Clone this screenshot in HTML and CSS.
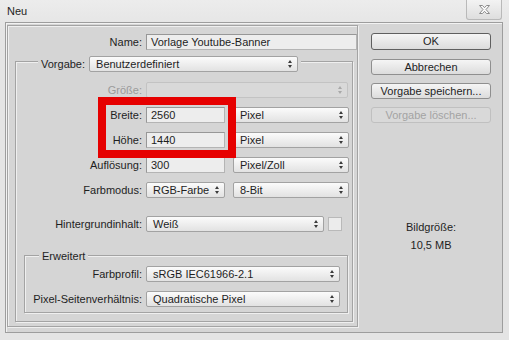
FILE: index.html
```html
<!DOCTYPE html>
<html lang="de">
	<head>
		<title>Neu</title>
		<meta charset="utf-8" />
		<link rel="stylesheet" href="styles.css">
	</head>
	<body>
		<div class="window">
			<div class="titlebar">
				<span class="title">Neu</span>
				<div class="close">
					<svg width="13" height="11" viewBox="0 0 13 11">
						<path d="M1.5 1.5h3l2 2.2 2-2.2h3l-3.5 4 3.5 4h-3l-2-2.2-2 2.2h-3l3.5-4z" fill="#fafafa" stroke="#8c8c8c" stroke-width="1" stroke-linejoin="round"/>
					</svg>
				</div>
			</div>

			<div class="client">
				<div class="left etched">
					<div class="row name-row">
						<label>Name:</label>
						<div class="input name-input">Vorlage Youtube-Banner</div>
					</div>

					<div class="group preset etched">
						<div class="legend">
							<label>Vorgabe:</label>
							<div class="select preset-select">Benutzerdefiniert<span class="arrows"></span></div>
						</div>

						<div class="row first">
							<label class="disabled">Größe:</label>
							<div class="select disabled size-select"><span class="arrows"></span></div>
						</div>
						<div class="row">
							<label>Breite:</label>
							<div class="input num">2560</div>
							<div class="select unit">Pixel<span class="arrows"></span></div>
						</div>
						<div class="row">
							<label>Höhe:</label>
							<div class="input num">1440</div>
							<div class="select unit">Pixel<span class="arrows"></span></div>
						</div>
						<div class="row">
							<label>Auflösung:</label>
							<div class="input num">300</div>
							<div class="select unit">Pixel/Zoll<span class="arrows"></span></div>
						</div>
						<div class="row">
							<label>Farbmodus:</label>
							<div class="select num">RGB-Farbe<span class="arrows"></span></div>
							<div class="select unit">8-Bit<span class="arrows"></span></div>
						</div>
						<div class="row spaced">
							<label>Hintergrundinhalt:</label>
							<div class="select bg-select">Weiß<span class="arrows"></span></div>
							<div class="swatch"></div>
						</div>

						<div class="group advanced etched">
							<div class="legend">Erweitert</div>
							<div class="row first">
								<label>Farbprofil:</label>
								<div class="select adv-select">sRGB IEC61966-2.1<span class="arrows"></span></div>
							</div>
							<div class="row">
								<label>Pixel-Seitenverhältnis:</label>
								<div class="select adv-select">Quadratische Pixel<span class="arrows"></span></div>
							</div>
						</div>
					</div>
				</div>

				<div class="right">
					<div class="button default">OK</div>
					<div class="button">Abbrechen</div>
					<div class="button">Vorgabe speichern...</div>
					<div class="button disabled">Vorgabe löschen...</div>

					<div class="info">
						<div>Bildgröße:</div>
						<div>10,5 MB</div>
					</div>
				</div>
			</div>

			<div class="highlight"></div>
		</div>
	</body>
</html>
```

FILE: styles.css
```css
* {
	box-sizing: border-box;
}

body {
	margin: 0;
	font-family: "Liberation Sans", Arial, sans-serif;
	font-size: 11px;
	color: #1e1e1e;
	background: #e6e6e6;
}

.window {
	position: relative;
	width: 509px;
	height: 340px;
	overflow: hidden;
	background: linear-gradient(#ececec, #e4e4e4 30px);
}

.titlebar {
	height: 22px;
	display: flex;
	justify-content: space-between;
	padding-left: 7px;
}
.title {
	line-height: 22px;
}
.close {
	width: 36px;
	height: 20px;
	margin-right: 7px;
	border: 1px solid #b9b9b9;
	border-top: 0;
	border-radius: 0 0 3px 3px;
	background: linear-gradient(#f3f3f3, #dedede);
	display: flex;
	align-items: center;
	justify-content: center;
}

.client {
	display: flex;
	margin-left: 5px;
	width: 498px;
	height: 311px;
	padding: 2px 1px;
	border: 1px solid #9d9d9d;
	box-shadow: inset 1px 1px 0 #f2f2f2;
	background: #d5d5d5;
}

.etched {
	border: 1px solid #a3a3a3;
	box-shadow: inset 1px 1px 0 #efefef, 1px 1px 0 #efefef;
}

.left {
	flex: none;
	width: 351px;
	height: 302px;
}

/* form rows */
.row {
	display: flex;
	align-items: center;
	height: 16px;
	margin-top: 9px;
}
.row label {
	flex: none;
	width: 126px;
	margin-right: 4px;
	text-align: right;
}
.row.first {
	margin-top: 10px;
}
.row.spaced {
	margin-top: 18px;
}
label.disabled {
	color: #9a9a9a;
}

.name-row {
	margin-top: 7px;
	height: 17px;
}
.name-row label {
	width: 134px;
}
.name-input {
	width: 211px;
	height: 17px;
}

.group .legend {
	display: flex;
	align-items: center;
	width: max-content;
	padding: 0 3px;
	background: #d5d5d5;
}

.preset {
	margin: 11px 0 0 7px;
	width: 338px;
	height: 261px;
}
.preset > .legend {
	height: 17px;
	margin: -7px 0 0 22px;
}
.preset-select {
	width: 209px;
	margin-left: 4px;
	height: 17px;
}
.size-select {
	width: 202px;
}

.advanced {
	margin: 23px 0 0 8px;
	width: 324px;
	height: 58px;
}
.advanced > .legend {
	height: 14px;
	margin: -7px 0 0 14px;
}
.advanced .row.first {
	margin-top: 3px;
}
.advanced .row label {
	width: 117px;
}
.adv-select {
	width: 194px;
}

/* controls */
.input {
	height: 16px;
	padding: 0 4px;
	line-height: 14px;
	border: 1px solid #979797;
	border-right-color: #b4b4b4;
	border-bottom-color: #b4b4b4;
	background: #ededed;
}
.name-input {
	line-height: 15px;
}

.select {
	display: flex;
	align-items: center;
	justify-content: space-between;
	height: 16px;
	padding: 0 5px 0 6px;
	border: 1px solid #a2a2a2;
	border-radius: 2px;
	background: linear-gradient(#fbfbfb, #e2e2e2);
}
.select.disabled {
	border-color: #c3c3c3;
	background: #d9d9d9;
	justify-content: flex-end;
}

.arrows {
	display: flex;
	flex-direction: column;
	gap: 2px;
	margin-left: auto;
}
.arrows::before,
.arrows::after {
	content: "";
	border-left: 2.5px solid transparent;
	border-right: 2.5px solid transparent;
}
.arrows::before {
	border-bottom: 3px solid #3a3a3a;
}
.arrows::after {
	border-top: 3px solid #3a3a3a;
}
.select.disabled .arrows::before {
	border-bottom-color: #a8a8a8;
}
.select.disabled .arrows::after {
	border-top-color: #a8a8a8;
}

.num {
	width: 79px;
}
.unit {
	width: 116px;
	margin-left: 8px;
}
.bg-select {
	width: 178px;
}
.swatch {
	width: 14px;
	height: 14px;
	margin-left: 4px;
	border: 1px solid #b9b9b9;
	background: #ececec;
}

/* right column */
.right {
	flex: 1;
	display: flex;
	flex-direction: column;
	padding: 8px 0 0 13px;
}

.button {
	width: 120px;
	height: 16px;
	margin-bottom: 8px;
	line-height: 14px;
	text-align: center;
	border: 1px solid #8f8f8f;
	border-radius: 3px;
	background: linear-gradient(#f5f5f5, #dcdcdc);
}
.button.default {
	height: 17px;
	margin-bottom: 9px;
	line-height: 15px;
	border-color: #5f5f5f;
}
.button.disabled {
	color: #a3a3a3;
	border-color: #c0c0c0;
	background: #d9d9d9;
}

.info {
	width: 120px;
	margin-top: 87px;
	text-align: center;
	line-height: 18px;
}

/* annotation */
.highlight {
	position: absolute;
	left: 98px;
	top: 97px;
	width: 138px;
	height: 61px;
	border: 8px solid #e60000;
}
```
